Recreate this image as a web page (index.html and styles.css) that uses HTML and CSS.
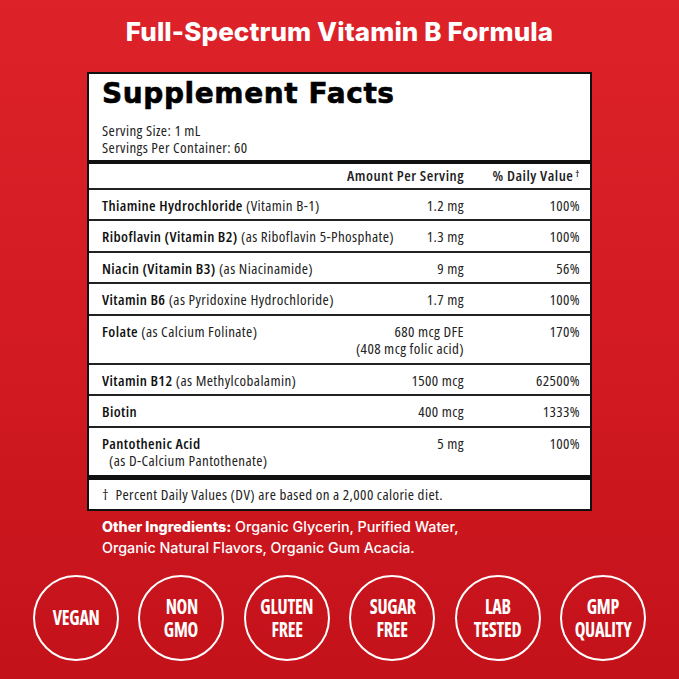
FILE: index.html
```html
<!DOCTYPE html>
<html lang="en">
<head>
<meta charset="utf-8">
<title>Full-Spectrum Vitamin B Formula</title>
<link rel="stylesheet" href="styles.css">
</head>
<body>
<main class="page">
  <h1 class="headline">Full-Spectrum Vitamin B Formula</h1>
  <section class="facts">
    <div class="facts-top">
      <h2 class="facts-title">Supplement Facts</h2>
      <p class="serving">Serving Size: 1 mL</p>
      <p class="serving">Servings Per Container: 60</p>
    </div>
    <div class="row head"><span class="name"></span><span class="amt">Amount Per Serving</span><span class="dv">% Daily Value<sup>†</sup></span></div>
    <div class="row"><span class="name"><b>Thiamine Hydrochloride</b> (Vitamin B-1)</span><span class="amt">1.2 mg</span><span class="dv">100%</span></div>
    <div class="row"><span class="name"><b>Riboflavin (Vitamin B2)</b> (as Riboflavin 5-Phosphate)</span><span class="amt">1.3 mg</span><span class="dv">100%</span></div>
    <div class="row"><span class="name"><b>Niacin (Vitamin B3)</b> (as Niacinamide)</span><span class="amt">9 mg</span><span class="dv">56%</span></div>
    <div class="row"><span class="name"><b>Vitamin B6</b> (as Pyridoxine Hydrochloride)</span><span class="amt">1.7 mg</span><span class="dv">100%</span></div>
    <div class="row"><span class="name"><b>Folate</b> (as Calcium Folinate)</span><span class="amt">680 mcg DFE<br>(408 mcg folic acid)</span><span class="dv">170%</span></div>
    <div class="row"><span class="name"><b>Vitamin B12</b> (as Methylcobalamin)</span><span class="amt">1500 mcg</span><span class="dv">62500%</span></div>
    <div class="row"><span class="name"><b>Biotin</b></span><span class="amt">400 mcg</span><span class="dv">1333%</span></div>
    <div class="row last"><span class="name"><b>Pantothenic Acid</b><br><span class="sub">(as D-Calcium Pantothenate)</span></span><span class="amt">5 mg</span><span class="dv">100%</span></div>
    <p class="foot">†&nbsp;&nbsp;Percent Daily Values (DV) are based on a 2,000 calorie diet.</p>
  </section>
  <p class="other"><strong>Other Ingredients:</strong> Organic Glycerin, Purified Water,<br>Organic Natural Flavors, Organic Gum Acacia.</p>
  <ul class="badges">
    <li class="badge"><span class="badge-line">VEGAN</span></li>
    <li class="badge"><span class="badge-line">NON</span><span class="badge-line">GMO</span></li>
    <li class="badge"><span class="badge-line">GLUTEN</span><span class="badge-line">FREE</span></li>
    <li class="badge"><span class="badge-line">SUGAR</span><span class="badge-line">FREE</span></li>
    <li class="badge"><span class="badge-line">LAB</span><span class="badge-line">TESTED</span></li>
    <li class="badge"><span class="badge-line">GMP</span><span class="badge-line">QUALITY</span></li>
  </ul>
</main>
</body>
</html>
```

FILE: styles.css
```css
html, body {
  margin: 0;
  padding: 0;
}
body {
  min-height: 100vh;
  background: linear-gradient(180deg, #dd2229 0%, #d41b23 45%, #c4121a 100%);
  font-family: "Open Sans", "DejaVu Sans Condensed", sans-serif;
  font-stretch: 75%;
  color: #1d1d1d;
}
.page {
  display: flex;
  flex-direction: column;
  align-items: center;
}
.headline {
  margin: 0;
  padding-top: 17px;
  font-family: Inter, "Noto Sans", sans-serif;
  font-stretch: 100%;
  font-weight: 800;
  font-size: 26px;
  line-height: 30px;
  color: #fff;
  letter-spacing: 0.1px;
}
.facts {
  margin-top: 25px;
  width: 501px;
  background: #fff;
  border: 2px solid #111;
}
.facts-top {
  padding: 3px 13px 4px;
  border-bottom: 4px solid #111;
}
.facts-title {
  margin: 0;
  font-family: "DejaVu Sans", sans-serif;
  font-stretch: 100%;
  font-weight: 700;
  font-size: 28px;
  line-height: 34px;
  letter-spacing: 0.6px;
  color: #000;
  -webkit-text-stroke: 0.6px #000;
}
.facts-title + .serving {
  margin-top: 11px;
}
.serving {
  margin: 0;
  font-size: 15px;
  letter-spacing: 0.4px;
  line-height: 17px;
  color: #222;
}
.row {
  display: flex;
  align-items: flex-start;
  padding: 7px 10px 5px 13px;
  border-bottom: 2px solid #222;
  font-size: 15px;
  letter-spacing: 0.4px;
  line-height: 17.5px;
  color: #222;
}
.row.head {
  padding-top: 3px;
  padding-bottom: 3px;
  font-weight: 600;
  letter-spacing: 0.5px;
}
.row.last {
  border-bottom: 5px solid #111;
}
.name {
  flex: 1;
}
.name b {
  font-weight: 560;
  color: #111;
}
.sub {
  padding-left: 7px;
}
.amt {
  text-align: right;
}
.dv {
  width: 116px;
  text-align: right;
  flex-shrink: 0;
}
.dv sup {
  font-size: 9px;
  vertical-align: 4px;
  line-height: 0;
  margin-left: 2px;
}
.foot {
  margin: 0;
  padding: 6px 13px 6px;
  font-size: 15px;
  letter-spacing: 0.4px;
  line-height: 17px;
  color: #222;
}
.other {
  margin: 5px 0 0;
  width: 475px;
  font-family: Inter, "Noto Sans", sans-serif;
  font-stretch: 100%;
  font-size: 14.3px;
  line-height: 21px;
  font-weight: 500;
  color: #fff;
}
.other strong {
  font-weight: 800;
}
.badges {
  list-style: none;
  margin: 17px 0 0;
  padding: 0;
  display: flex;
  gap: 19.4px;
  justify-content: center;
}
.badge {
  width: 82px;
  height: 82px;
  border: 2px solid #fff;
  border-radius: 50%;
  display: flex;
  flex-direction: column;
  align-items: center;
  justify-content: center;
  text-align: center;
  font-family: "Open Sans", "DejaVu Sans Condensed", sans-serif;
  font-stretch: 75%;
  font-weight: 700;
  font-size: 21px;
  color: #fff;
}
.badge-line {
  display: block;
  height: 23px;
  line-height: 23px;
  letter-spacing: -0.3px;
  transform: scaleX(0.86);
}
```
